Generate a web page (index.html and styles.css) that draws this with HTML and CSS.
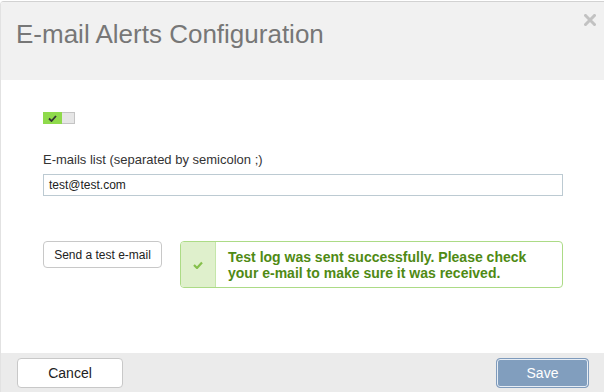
FILE: index.html
```html
<!DOCTYPE html>
<html>
<head>
<meta charset="utf-8">
<link rel="stylesheet" href="styles.css">
</head>
<body>
<div class="modal">
  <div class="modal-header">
    <h1 class="title">E-mail Alerts Configuration</h1>
    <span class="close" aria-label="Close">
      <svg width="12" height="12" viewBox="0 0 12 12"><path d="M1.5 1.5 L10.5 10.5 M10.5 1.5 L1.5 10.5" stroke="#c2c2c2" stroke-width="3" stroke-linecap="square"/></svg>
    </span>
  </div>
  <div class="modal-body">
    <div class="toggle">
      <span class="toggle-on">
        <svg width="9" height="7" viewBox="0 0 9 7"><path d="M1 3.5 L3.5 6 L8 1" fill="none" stroke="#333" stroke-width="1.8"/></svg>
      </span>
      <span class="toggle-off"></span>
    </div>
    <label class="field-label">E-mails list (separated by semicolon ;)</label>
    <div class="field-input">test@test.com</div>
    <div class="test-row">
      <button class="btn btn-test">Send a test e-mail</button>
      <div class="alert">
        <div class="alert-icon">
          <svg width="10" height="8" viewBox="0 0 10 8"><path d="M1 4 L4 7 L9 1.5" fill="none" stroke="#86c04c" stroke-width="2.2"/></svg>
        </div>
        <div class="alert-text">Test log was sent successfully. Please check your e-mail to make sure it was received.</div>
      </div>
    </div>
  </div>
  <div class="modal-footer">
    <button class="btn btn-cancel">Cancel</button>
    <button class="btn btn-save">Save</button>
  </div>
</div>
</body>
</html>
```

FILE: styles.css
```css
html, body {
  margin: 0;
  padding: 0;
  background: #ffffff;
}
body {
  font-family: "Liberation Sans", Arial, sans-serif;
  color: #333333;
}
.modal {
  position: relative;
  margin-top: 1px;
  width: 604px;
  height: 391px;
  box-sizing: border-box;
  border-top: 1px solid #d2d2d2;
  border-left: 1px solid #e2e2e2;
  border-top-left-radius: 4px;
  display: flex;
  flex-direction: column;
  overflow: hidden;
}
.modal-header {
  background: #f1f1f1;
  height: 78px;
  box-sizing: border-box;
  padding: 17px 15px 0;
}
.title {
  margin: 0;
  font-size: 26px;
  line-height: 30px;
  font-weight: normal;
  color: #777777;
}
.close {
  position: absolute;
  top: 12px;
  right: 8px;
  width: 12px;
  height: 12px;
  display: block;
}
.close svg {
  display: block;
}
.modal-body {
  flex: 1;
  padding: 32px 41px 0 42px;
}
.toggle {
  display: flex;
  width: 32px;
  height: 12px;
}
.toggle-on {
  width: 19px;
  height: 12px;
  background: #8fda4b;
  display: flex;
  align-items: center;
  justify-content: center;
}
.toggle-on svg {
  display: block;
}
.toggle-off {
  width: 13px;
  height: 12px;
  box-sizing: border-box;
  background: #e6e6e6;
  border: 1px solid #c4c4c4;
  border-left: none;
}
.field-label {
  display: block;
  margin-top: 28px;
  font-size: 13px;
  line-height: 15px;
  color: #333333;
}
.field-input {
  margin-top: 7px;
  height: 22px;
  box-sizing: border-box;
  border: 1px solid #bccad2;
  padding: 0 5px;
  font-size: 12px;
  line-height: 20px;
  color: #222222;
}
.test-row {
  margin-top: 45px;
  display: flex;
  align-items: flex-start;
  gap: 18px;
}
.btn {
  font-family: "Liberation Sans", Arial, sans-serif;
  background: #ffffff;
  border: 1px solid #c8c8c8;
  border-radius: 4px;
  color: #222222;
  cursor: pointer;
  box-sizing: border-box;
}
.btn-test {
  flex-shrink: 0;
  height: 27px;
  width: 119px;
  padding: 0;
  font-size: 12px;
}
.alert {
  flex: 1;
  display: flex;
  border: 1px solid #acdb86;
  border-radius: 4px;
  overflow: hidden;
}
.alert-icon {
  flex-shrink: 0;
  width: 34px;
  background: #dff0cc;
  border-right: 1px solid #c5e6aa;
  display: flex;
  align-items: center;
  justify-content: center;
}
.alert-icon svg {
  display: block;
}
.alert-text {
  flex: 1;
  padding: 7px 24px 6px 12px;
  font-size: 14px;
  line-height: 16px;
  font-weight: bold;
  color: #4f8a14;
}
.modal-footer {
  height: 39px;
  background: #ebebeb;
  display: flex;
  justify-content: space-between;
  align-items: flex-start;
  padding: 5px 15px 0 16px;
  box-sizing: border-box;
}
.btn-cancel {
  width: 106px;
  height: 30px;
  font-size: 14px;
  padding: 0;
}
.btn-save {
  width: 93px;
  height: 30px;
  font-size: 14px;
  padding: 0;
  background: #819ebe;
  border: 1px solid #7f9bbc;
  box-shadow: inset 0 0 0 1px #e6edf5;
  color: #ffffff;
}
```
